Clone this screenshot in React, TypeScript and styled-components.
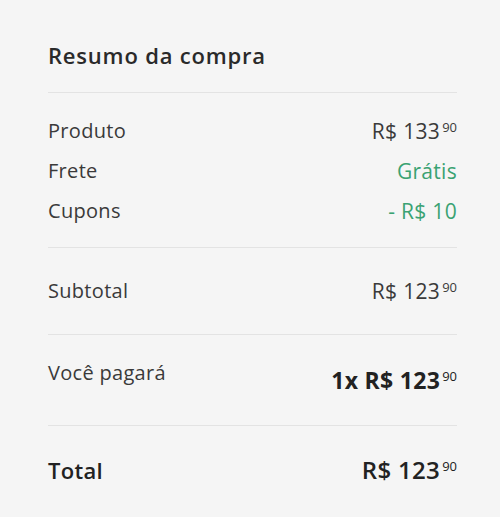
import React from "react";
import styled, { createGlobalStyle } from "styled-components";

const GlobalStyle = createGlobalStyle`
  html, body {
    margin: 0;
    padding: 0;
    background: #f5f5f5;
  }
  body {
    font-family: "Open Sans", "Noto Sans", sans-serif;
    color: #333;
  }
`;

const Card = styled.div`
  width: 500px;
  height: 517px;
  box-sizing: border-box;
  padding: 43px 43px 0 48px;
  background: #f5f5f5;
`;

const Title = styled.h2`
  margin: 0;
  font-size: 22px;
  line-height: 24px;
  font-weight: 600;
  letter-spacing: 0.8px;
  color: #2a2a2a;
  padding-bottom: 25px;
`;

const Section = styled.div<{ top: number; bottom: number; gap?: number }>`
  display: flex;
  flex-direction: column;
  gap: ${(p) => p.gap ?? 16}px;
  padding: ${(p) => p.top}px 0 ${(p) => p.bottom}px;
  border-top: 1px solid #e3e3e3;
`;

const Row = styled.div<{ align?: string }>`
  display: flex;
  justify-content: space-between;
  align-items: ${(p) => p.align ?? "center"};
  font-size: 20px;
  line-height: 24px;
`;

const Label = styled.span<{ strong?: boolean }>`
  color: ${(p) => (p.strong ? "#222" : "#3a3a3a")};
  font-weight: ${(p) => (p.strong ? 600 : 400)};
  font-size: ${(p) => (p.strong ? 22 : 20)}px;
  letter-spacing: 0.3px;
`;

const Value = styled.span<{ green?: boolean; weight?: number; size?: number; offset?: number }>`
  color: ${(p) => (p.green ? "#3aa272" : p.weight ? "#222" : "#3a3a3a")};
  font-weight: ${(p) => p.weight ?? 400};
  font-size: ${(p) => p.size ?? 21}px;
  margin-top: ${(p) => p.offset ?? 0}px;
  display: inline-flex;
  align-items: flex-start;
  letter-spacing: 0.3px;
`;

const Cents = styled.sup`
  font-size: 13px;
  line-height: 13px;
  font-weight: 400;
  letter-spacing: 0;
  margin-left: 2px;
  margin-top: 2px;
  vertical-align: baseline;
`;

const Price = ({ whole, cents, prefix = "" }: { whole: string; cents: string; prefix?: string }) => (
  <>
    {prefix}R$ {whole}
    <Cents>{cents}</Cents>
  </>
);

export default function App() {
  return (
    <>
      <GlobalStyle />
      <Card>
        <Title>Resumo da compra</Title>
        <Section top={26} bottom={24}>
          <Row>
            <Label>Produto</Label>
            <Value>
              <Price whole="133" cents="90" />
            </Value>
          </Row>
          <Row>
            <Label>Frete</Label>
            <Value green>Grátis</Value>
          </Row>
          <Row>
            <Label>Cupons</Label>
            <Value green>- R$ 10</Value>
          </Row>
        </Section>
        <Section top={31} bottom={31}>
          <Row>
            <Label>Subtotal</Label>
            <Value>
              <Price whole="123" cents="90" />
            </Value>
          </Row>
        </Section>
        <Section top={26} bottom={33}>
          <Row align="flex-start">
            <Label>Você pagará</Label>
            <Value weight={700} size={23} offset={7}>
              <Price prefix="1x " whole="123" cents="90" />
            </Value>
          </Row>
        </Section>
        <Section top={32} bottom={0}>
          <Row>
            <Label strong>Total</Label>
            <Value weight={600} size={24}>
              <Price whole="123" cents="90" />
            </Value>
          </Row>
        </Section>
      </Card>
    </>
  );
}
